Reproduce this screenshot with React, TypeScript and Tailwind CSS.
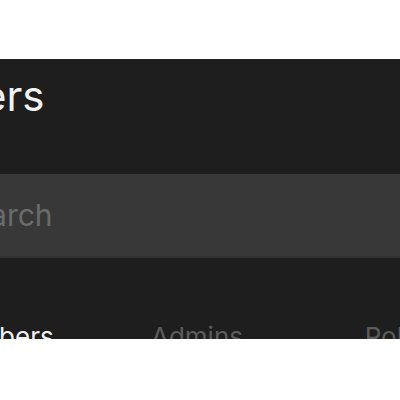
import React from 'react';
import { Search } from 'lucide-react';

const tabs = [
  { label: 'Members', active: true },
  { label: 'Admins', active: false },
  { label: 'Roles', active: false },
];

export default function App() {
  return (
    <div
      className="h-[400px] w-[400px] overflow-hidden bg-white pt-[59px]"
      style={{ fontFamily: 'Inter, "Liberation Sans", sans-serif' }}
    >
      <div className="-ml-[152px] h-[280px] w-[700px] overflow-hidden border-t border-[#242424] bg-[#1e1e1e]">
        <h1 className="pl-[9px] pt-[11px] text-[42px] font-normal leading-[50px] text-[#f2f2f2]">
          Members
        </h1>

        <div className="mt-[53px] ml-[11px] flex h-[84px] items-center gap-[40px] border-b-2 border-[#313131] bg-[#383838] pl-[24px]">
          <Search className="h-[30px] w-[30px] text-[#6b6b6b]" strokeWidth={2} />
          <span className="text-[30px] leading-[36px] text-[#6b6b6b]">Search</span>
        </div>

        <div className="mt-[63px] ml-[47px] grid w-[604px] grid-cols-3">
          {tabs.map((t) => (
            <div
              key={t.label}
              className={`text-center text-[26px] leading-[32px] ${t.active ? 'text-[#f2f2f2]' : 'text-[#5c5c5c]'}`}
            >
              {t.label}
            </div>
          ))}
        </div>
      </div>
    </div>
  );
}
